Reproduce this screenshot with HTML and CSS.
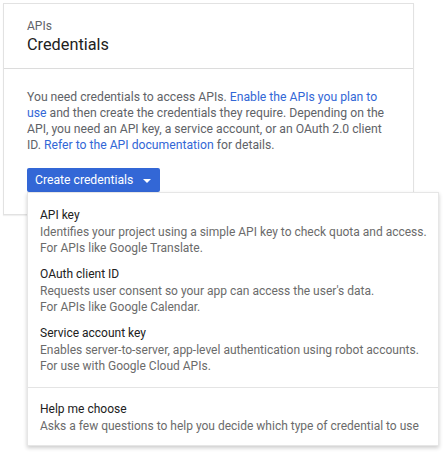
FILE: index.html
```html
<!DOCTYPE html>
<html>
<head>
<meta charset="utf-8">
<link rel="stylesheet" href="styles.css">
</head>
<body>
<div class="card">
  <div class="card-header">
    <div class="eyebrow">APIs</div>
    <div class="title">Credentials</div>
  </div>
  <div class="card-body">
    <p class="intro">You need credentials to access APIs. <a href="#">Enable the APIs you plan to use</a> and then create the credentials they require. Depending on the API, you need an API key, a service account, or an OAuth 2.0 client ID. <a href="#">Refer to the API documentation</a> for details.</p>
    <div class="dropdown">
      <button class="btn">Create credentials<span class="caret"></span></button>
      <div class="menu">
        <div class="item">
          <div class="item-title">API key</div>
          <div class="item-desc">Identifies your project using a simple API key to check quota and access.<br>For APIs like Google Translate.</div>
        </div>
        <div class="item">
          <div class="item-title">OAuth client ID</div>
          <div class="item-desc">Requests user consent so your app can access the user's data.<br>For APIs like Google Calendar.</div>
        </div>
        <div class="item">
          <div class="item-title">Service account key</div>
          <div class="item-desc">Enables server-to-server, app-level authentication using robot accounts.<br>For use with Google Cloud APIs.</div>
        </div>
        <div class="divider"></div>
        <div class="item">
          <div class="item-title">Help me choose</div>
          <div class="item-desc">Asks a few questions to help you decide which type of credential to use</div>
        </div>
      </div>
    </div>
  </div>
</div>
</body>
</html>
```
FILE: styles.css
```css
html, body {
  margin: 0;
  padding: 0;
  background: #fff;
}
body {
  box-sizing: border-box;
  min-height: 458px;
  padding: 3px;
  font-family: Roboto, "Liberation Sans", sans-serif;
  font-size: 12.2px;
  color: #212121;
}
.card {
  width: 409px;
  border: 1px solid #e2e2e2;
  box-shadow: 0 1px 1px rgba(0,0,0,0.06);
  background: #fff;
}
.card-header {
  padding: 14px 23px 12px;
  border-bottom: 1px solid #dcdcdc;
}
.eyebrow {
  font-size: 12px;
  line-height: 16px;
  color: #5f6368;
}
.title {
  font-size: 16.3px;
  line-height: 22px;
  color: #212121;
}
.card-body {
  padding: 20px 23px 22px;
}
.intro {
  margin: 0;
  font-size: 12.2px;
  line-height: 16px;
  color: #5f6368;
}
.intro a {
  color: #3367d6;
  text-decoration: none;
}
.dropdown {
  position: relative;
  display: inline-block;
  margin-top: 15px;
  vertical-align: top;
}
.btn {
  display: flex;
  align-items: center;
  height: 24px;
  padding: 0 9px 0 8px;
  border: 0;
  border-radius: 2px;
  background: #3367d6;
  color: #fff;
  font-family: Roboto, "Liberation Sans", sans-serif;
  font-size: 12.2px;
  line-height: 24px;
}
.caret {
  width: 0;
  height: 0;
  margin-left: 10px;
  margin-top: 1px;
  border-left: 4px solid transparent;
  border-right: 4px solid transparent;
  border-top: 4px solid #fff;
}
.menu {
  position: absolute;
  top: 100%;
  left: 0;
  width: 410px;
  padding: 9px 0 6px;
  background: #fff;
  border: 1px solid #e6e6e6;
  box-shadow: 0 2px 4px rgba(0,0,0,0.2);
  z-index: 2;
}
.item {
  padding: 5px 12px;
}
.item-title {
  font-size: 12px;
  line-height: 17px;
  color: #212121;
}
.item-desc {
  font-size: 12px;
  line-height: 16px;
  color: #6b6b6b;
  white-space: nowrap;
}
.divider {
  height: 1px;
  background: #e4e4e4;
  margin: 8px 0 8px;
}
```
